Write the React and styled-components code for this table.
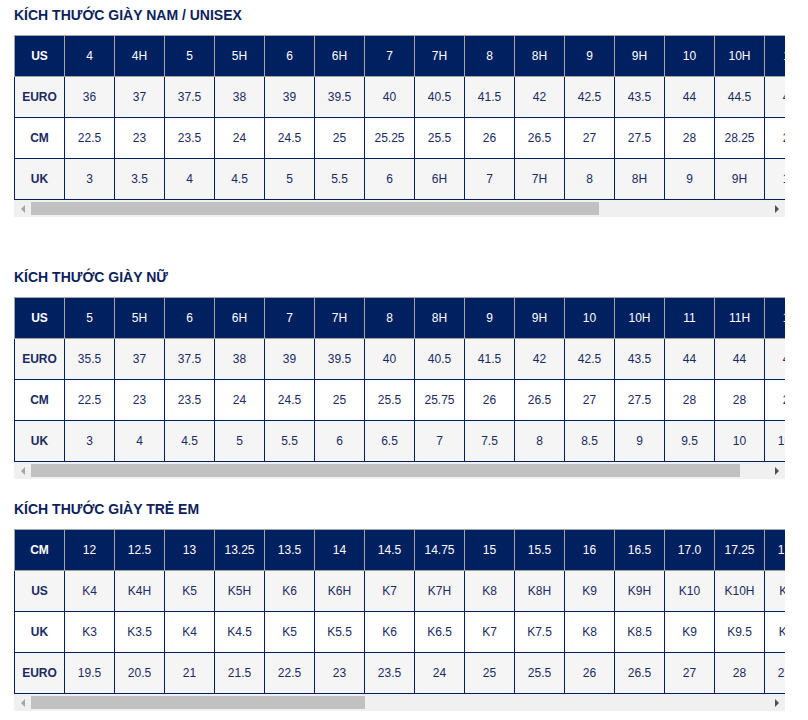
import React from 'react';
import styled, { createGlobalStyle } from 'styled-components';

const GlobalStyle = createGlobalStyle`
  body {
    margin: 0;
    background: #ffffff;
    font-family: "Liberation Sans", Arial, sans-serif;
  }
`;

const COL_WIDTH = 50;
const VIEW_WIDTH = 771;
const ARROW_WIDTH = 17;

const Page = styled.div`
  padding: 7px 23px 10px 14px;
  width: ${VIEW_WIDTH}px;
`;

const Section = styled.section`
  margin-top: ${props => props.gap || 0}px;
`;

const Title = styled.h3`
  margin: 0 0 12px;
  font-size: 14px;
  line-height: 16px;
  font-weight: bold;
  color: #0d1f5c;
  text-transform: uppercase;
`;

const TableViewport = styled.div`
  width: ${VIEW_WIDTH}px;
  overflow: hidden;
`;

const Table = styled.table`
  border-collapse: collapse;
  table-layout: fixed;
  font-size: 12px;
  color: #1a2a62;
`;

const HeadCell = styled.th`
  width: ${COL_WIDTH - 1}px;
  min-width: ${COL_WIDTH - 1}px;
  height: 40px;
  padding: 0;
  background: #002060;
  color: #ffffff;
  border: 1px solid #a3a3a3;
  font-weight: ${props => (props.label ? 'bold' : 'normal')};
  text-align: center;
  white-space: nowrap;
`;

const Row = styled.tr`
  background: ${props => (props.shaded ? '#f5f5f5' : '#ffffff')};
`;

const Cell = styled.td`
  width: ${COL_WIDTH - 1}px;
  height: 40px;
  padding: 0;
  border: 1px solid #002060;
  font-weight: ${props => (props.label ? 'bold' : 'normal')};
  text-align: center;
  white-space: nowrap;
`;

const Scrollbar = styled.div`
  display: flex;
  width: ${VIEW_WIDTH}px;
  height: 17px;
  background: #f0f0f0;
`;

const ArrowButton = styled.div`
  flex: 0 0 ${ARROW_WIDTH}px;
  display: flex;
  align-items: center;
  justify-content: center;
`;

const Arrow = styled.span`
  width: 0;
  height: 0;
  border-top: 4px solid transparent;
  border-bottom: 4px solid transparent;
  ${props =>
    props.dir === 'left'
      ? `border-right: 4px solid ${props.disabled ? '#a3a3a3' : '#505050'};`
      : `border-left: 4px solid ${props.disabled ? '#a3a3a3' : '#505050'};`}
`;

const Track = styled.div`
  flex: 1;
  padding-top: 2px;
`;

const Thumb = styled.div`
  height: 13px;
  background: #c1c1c1;
`;

const SizeTable = ({ title, rows, gap }) => {
  const [head, ...body] = rows;
  const cols = head.length;
  const contentWidth = cols * COL_WIDTH + 1;
  const trackWidth = VIEW_WIDTH - ARROW_WIDTH * 2;
  const thumbWidth = Math.round((trackWidth * VIEW_WIDTH) / contentWidth);

  return (
    <Section gap={gap}>
      <Title>{title}</Title>
      <TableViewport>
        <Table style={{ width: contentWidth }}>
          <thead>
            <tr>
              {head.map((v, i) => (
                <HeadCell key={i} label={i === 0}>{v}</HeadCell>
              ))}
            </tr>
          </thead>
          <tbody>
            {body.map((row, r) => (
              <Row key={r} shaded={r % 2 === 0}>
                {row.map((v, i) => (
                  <Cell key={i} label={i === 0}>{v}</Cell>
                ))}
              </Row>
            ))}
          </tbody>
        </Table>
      </TableViewport>
      <Scrollbar>
        <ArrowButton><Arrow dir="left" disabled /></ArrowButton>
        <Track>
          <Thumb style={{ width: thumbWidth }} />
        </Track>
        <ArrowButton><Arrow dir="right" /></ArrowButton>
      </Scrollbar>
    </Section>
  );
};

const men = [
  ['US', '4', '4H', '5', '5H', '6', '6H', '7', '7H', '8', '8H', '9', '9H', '10', '10H', '11', '11H', '12', '12H', '13'],
  ['EURO', '36', '37', '37.5', '38', '39', '39.5', '40', '40.5', '41.5', '42', '42.5', '43.5', '44', '44.5', '45', '45.5', '46', '46.5', '47'],
  ['CM', '22.5', '23', '23.5', '24', '24.5', '25', '25.25', '25.5', '26', '26.5', '27', '27.5', '28', '28.25', '29', '29.5', '30', '30.5', '31'],
  ['UK', '3', '3.5', '4', '4.5', '5', '5.5', '6', '6H', '7', '7H', '8', '8H', '9', '9H', '10', '10H', '11', '11H', '12'],
];

const women = [
  ['US', '5', '5H', '6', '6H', '7', '7H', '8', '8H', '9', '9H', '10', '10H', '11', '11H', '12'],
  ['EURO', '35.5', '37', '37.5', '38', '39', '39.5', '40', '40.5', '41.5', '42', '42.5', '43.5', '44', '44', '45'],
  ['CM', '22.5', '23', '23.5', '24', '24.5', '25', '25.5', '25.75', '26', '26.5', '27', '27.5', '28', '28', '29'],
  ['UK', '3', '4', '4.5', '5', '5.5', '6', '6.5', '7', '7.5', '8', '8.5', '9', '9.5', '10', '10.5'],
];

const kids = [
  ['CM', '12', '12.5', '13', '13.25', '13.5', '14', '14.5', '14.75', '15', '15.5', '16', '16.5', '17.0', '17.25', '17.5', '18', '18.5', '18.75', '19', '19.5', '20', '20.5', '21', '21.5', '22', '22.5', '23', '23.5', '24', '24.5', '25', '25.5', '26'],
  ['US', 'K4', 'K4H', 'K5', 'K5H', 'K6', 'K6H', 'K7', 'K7H', 'K8', 'K8H', 'K9', 'K9H', 'K10', 'K10H', 'K11', 'K11H', 'K12', 'K12H', 'K13', 'K13H', '1', '1H', '2', '2H', '3', '3H', '4', '4H', '5', '5H', '6', '6H', '7'],
  ['UK', 'K3', 'K3.5', 'K4', 'K4.5', 'K5', 'K5.5', 'K6', 'K6.5', 'K7', 'K7.5', 'K8', 'K8.5', 'K9', 'K9.5', 'K10', 'K10.5', 'K11', 'K11.5', 'K12', 'K12.5', 'K13', 'K13.5', '1', '1.5', '2', '2.5', '3', '3.5', '4', '4.5', '5', '5.5', '6'],
  ['EURO', '19.5', '20.5', '21', '21.5', '22.5', '23', '23.5', '24', '25', '25.5', '26', '26.5', '27', '28', '28.5', '29', '30', '30.5', '31', '31.5', '32', '33', '33.5', '34', '35', '35.5', '36', '36.5', '37', '37.5', '38', '38.5', '39'],
];

const App = () => (
  <>
    <GlobalStyle />
    <Page>
      <SizeTable title="Kích thước giày nam / unisex" rows={men} />
      <SizeTable title="Kích thước giày nữ" rows={women} gap={52} />
      <SizeTable title="Kích thước giày trẻ em" rows={kids} gap={22} />
    </Page>
  </>
);

export default App;
